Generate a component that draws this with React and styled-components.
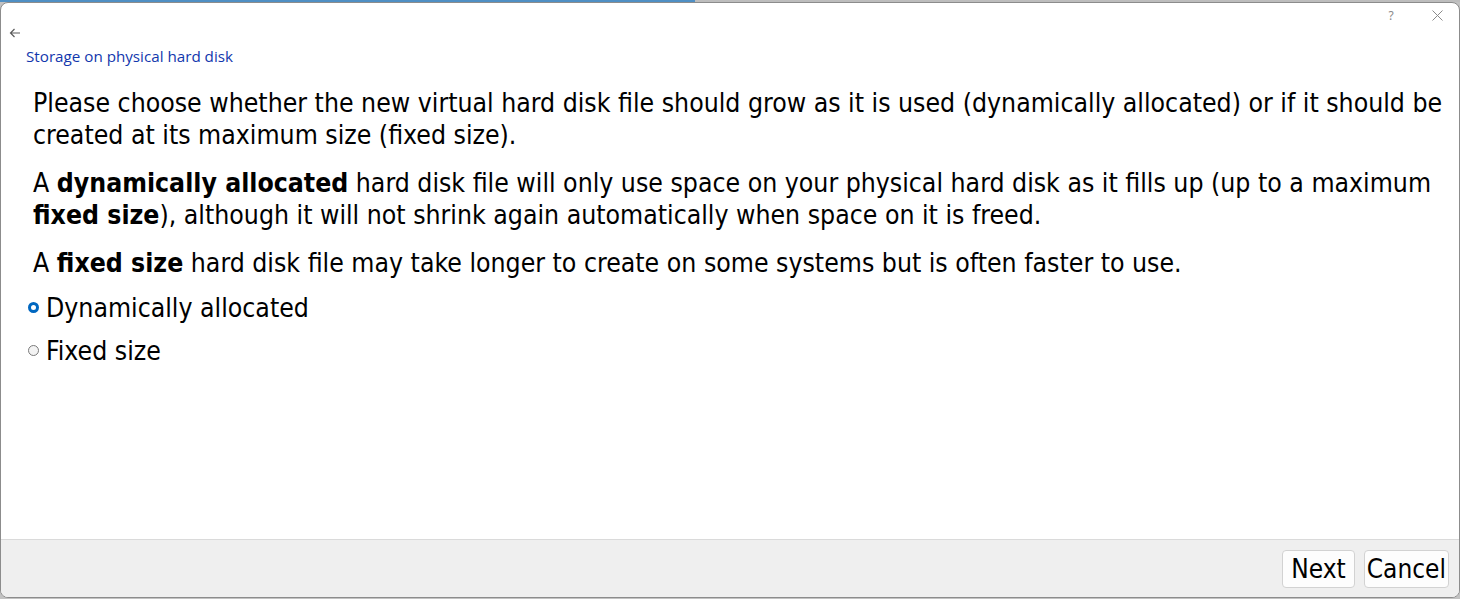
import React, { useState } from 'react'
import styled, { createGlobalStyle } from 'styled-components'

const Global = createGlobalStyle`
  html, body { margin: 0; padding: 0; height: 100%; background: #c4c4c4; }
  #root { height: 100%; }
  * { box-sizing: border-box; }
`;

const Screen = styled.div`
  width: 1460px;
  height: 599px;
  display: flex;
  flex-direction: column;
  overflow: hidden;
  background: #c2c2c2;`;

const Desktop = styled.div`
  height: 2px;
  flex: 0 0 2px;
  display: flex;`;

const DesktopPart = styled.div`
  width: ${p => p.w}px;
  background: ${p => p.color};`;

const Window = styled.div`
  flex: 1;
  display: flex;
  flex-direction: column;
  background: #ffffff;
  border: 1px solid #8c8c8c;
  border-radius: 8px;
  overflow: hidden;
  margin-bottom: 1px;`;

const TitleBar = styled.div`
  height: 24px;
  display: flex;
  justify-content: flex-end;
  align-items: center;
  padding-right: 14px;
  gap: 30px;
  color: #8a8a8a;
  font-family: "Noto Sans", sans-serif;
  font-size: 12px;`;

const TitleButton = styled.span`
  width: 16px;
  display: flex;
  justify-content: center;
  align-items: center;`;

const BackRow = styled.div`
  height: 14px;
  padding-left: 8px;
  display: flex;
  align-items: center;
  margin-top: -1px;`;

const Heading = styled.div`
  padding: 7px 0 0 25px;
  font-family: "Open Sans", sans-serif;
  font-size: 15.2px;
  color: #1237ad;
  line-height: 18px;`;

const Body = styled.div`
  flex: 1;
  padding: 22px 4px 0 32px;
  font-family: "DejaVu Sans Condensed", "DejaVu Sans", sans-serif;
  font-size: 26.4px;
  color: #000;`;

const Para = styled.p`
  margin: 0 0 16px 0;
  line-height: 32px;`;

const Options = styled.div`
  display: flex;
  flex-direction: column;
  gap: 11px;
  margin-left: -5px;
  margin-top: -4px;`;

const Option = styled.label`
  display: flex;
  align-items: center;
  gap: 7px;
  height: 32px;
  cursor: default;`;

const Radio = styled.span`
  width: 11px;
  height: 11px;
  border-radius: 50%;
  flex: 0 0 11px;
  background: ${p => (p.checked ? '#ffffff' : '#f3f3f3')};
  border: ${p => (p.checked ? '3px solid #0067c0' : '1px solid #7a7a7a')};`;

const Footer = styled.div`
  height: 58px;
  background: #efefef;
  border-top: 1px solid #dadada;
  display: flex;
  justify-content: flex-end;
  align-items: center;
  gap: 9px;
  padding-right: 10px;`;

const Button = styled.button`
  height: 38px;
  padding: 0 ${p => p.pad}px;
  background: #fdfdfd;
  border: 1px solid #d2d2d2;
  border-radius: 4px;
  font-family: "DejaVu Sans Condensed", "DejaVu Sans", sans-serif;
  font-size: 26px;
  color: #000;`;

export default function App() {
  const [choice, setChoice] = useState('dynamic');

  return <>
    <Global/>
    <Screen>
      <Desktop>
        <DesktopPart w={695} color="#4f8fc4"/>
        <DesktopPart w={765} color="#bdbdbd"/>
      </Desktop>
      <Window>
        <TitleBar>
          <TitleButton>?</TitleButton>
          <TitleButton>
            <svg width="11" height="11" viewBox="0 0 11 11">
              <path d="M0.5 0.5 L10.5 10.5 M10.5 0.5 L0.5 10.5" stroke="#8a8a8a" strokeWidth="1"/>
            </svg>
          </TitleButton>
        </TitleBar>
        <BackRow>
          <svg width="12" height="10" viewBox="0 0 12 10">
            <path d="M11 5 H1.5 M5.5 1 L1.5 5 L5.5 9" stroke="#5a5a5a" strokeWidth="1.2" fill="none"/>
          </svg>
        </BackRow>
        <Heading>Storage on physical hard disk</Heading>
        <Body>
          <Para>
            Please choose whether the new virtual hard disk file should grow as it is used (dynamically allocated) or if it should be created at its maximum size (fixed size).
          </Para>
          <Para>
            A <b>dynamically allocated</b> hard disk file will only use space on your physical hard disk as it fills up (up to a maximum <b>fixed size</b>), although it will not shrink again automatically when space on it is freed.
          </Para>
          <Para>
            A <b>fixed size</b> hard disk file may take longer to create on some systems but is often faster to use.
          </Para>
          <Options>
            <Option onClick={() => setChoice('dynamic')}>
              <Radio checked={choice === 'dynamic'}/>
              Dynamically allocated
            </Option>
            <Option onClick={() => setChoice('fixed')}>
              <Radio checked={choice === 'fixed'}/>
              Fixed size
            </Option>
          </Options>
        </Body>
        <Footer>
          <Button pad={8}>Next</Button>
          <Button pad={2}>Cancel</Button>
        </Footer>
      </Window>
    </Screen>
  </>
}
